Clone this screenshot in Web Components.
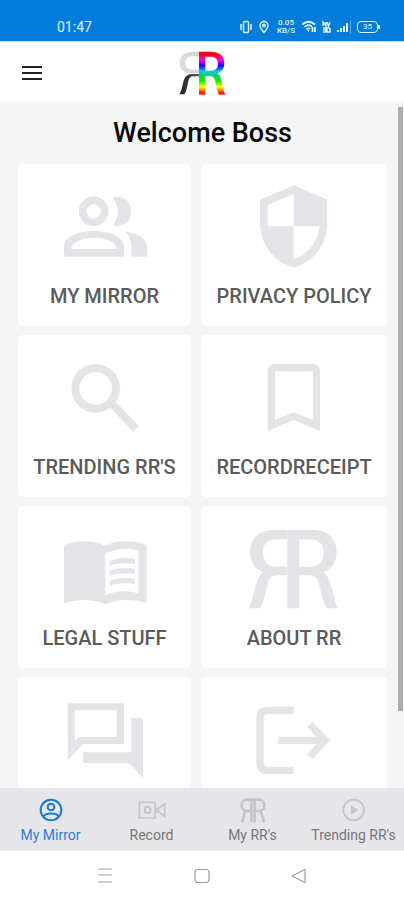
<!DOCTYPE html>
<html lang="en">
<head>
<meta charset="utf-8">
<meta name="viewport" content="width=device-width, initial-scale=1">
<title>RR</title>
<style>
html, body { margin: 0; height: 100%; }
body { font-family: Roboto, "Noto Sans", sans-serif; background: #fff; }
</style>
</head>
<body>
<rr-app></rr-app>
<script>
const RESET = `
  *, *::before, *::after { box-sizing: border-box; }
  button { appearance: none; border: 0; margin: 0; padding: 0; background: none; font: inherit; color: inherit; cursor: pointer; }
  svg { display: block; }
`;

/* One half of the double-R monogram; the other half is its mirror image. */
const HALF_R = 'M862 90H940C985 90 1010 118 1010 157C1010 188 996 207 970 216C985 227 991 248 997 272C1002 292 1006 308 1014 325H980C968 305 963 274 957 252C952 235 945 226 925 226H898V325H862ZM898 118V200H930C955 200 971 186 971 158C971 130 955 118 930 118Z';
const MONOGRAM = `<path fill-rule="evenodd" d="${HALF_R}"/><path fill-rule="evenodd" transform="translate(1760 0) scale(-1 1)" d="M898 90H940C985 90 1010 118 1010 157C1010 188 996 207 970 216C985 227 991 248 997 272C1002 292 1006 308 1014 325H980C968 305 963 274 957 252C952 235 945 226 925 226H898V200H930C955 200 971 186 971 158C971 130 955 118 930 118H898Z"/>`;

const ICONS = {
  people: ['164 63 300 300', `<circle cx="280" cy="169" r="33" fill="none" stroke="currentColor" stroke-width="23"/>
    <path d="M337 128C346 124 392 122 392 169C392 216 346 215 337 211C358 184 358 155 337 128Z"/>
    <path fill-rule="evenodd" d="M191 305V276C191 242 240 228 281 228S371 242 371 276V305ZM212 282H350C349 262 318 248 281 248S213 262 212 282Z"/>
    <path d="M376 230C412 235 440 250 440 277V305H393V277C393 255 386 241 376 230Z"/>`],
  shield: ['732 63 300 300', `<path fill-rule="evenodd" d="M881 91L982 134V205C982 268 940 321 881 338C822 321 780 268 780 205V134ZM881 116L803 150V214H881ZM881 214V314C922 300 954 260 959 214Z"/>`],
  search: ['164 51 300 300', `<circle cx="286" cy="175" r="61" fill="none" stroke="currentColor" stroke-width="24"/>
    <path d="M345 232L399 288" stroke="currentColor" stroke-width="24" stroke-linecap="square" stroke-linejoin="round"/>`],
  bookmark: ['732 51 300 300', `<path fill-rule="evenodd" d="M826 102H938Q960 102 960 126V303L881 270L803 303V126Q803 102 826 102ZM825 124V270L881 247L938 270V124Z"/>`],
  book: ['164 54 300 300', `<path fill-rule="evenodd" d="M191 135C225 121 280 118 315 138C350 118 405 121 439 135V310C400 296 350 296 315 313C280 296 230 296 191 310ZM315 160V287C345 271 385 271 414 281V151C380 142 345 146 315 160Z"/>
    <path d="M327 183C350 173 380 172 404 177V192C380 188 350 188 327 198ZM327 213C350 203 380 202 404 207V222C380 218 350 218 327 228ZM327 243C350 233 380 232 404 237V252C380 248 350 248 327 258Z"/>`],
  monogram: ['732 54 300 300', MONOGRAM],
  chat: ['164 57 300 300', `<path fill-rule="evenodd" d="M202 100H371V222H248L202 270ZM223 121V214L236 201H349V121Z"/>
    <path d="M393 144H420Q428 144 428 152V325L386 279H256Q248 279 248 271V247H393Z"/>`],
  exit: ['732 57 300 300', `<path d="M881 121H802Q780 121 780 143V279Q780 301 802 301H881M835 211H980M929 164L976 211L929 260" fill="none" stroke="currentColor" stroke-width="22"/>`],
  user: ['101 370 102 102', `<g fill="none" stroke="currentColor" stroke-width="6"><circle cx="152" cy="421" r="31"/><circle cx="152" cy="412" r="10"/><path d="M129 440C138 429 166 429 175 440"/></g>`],
  camera: ['407 370 102 102', `<path d="M420 398H467V445H420ZM496 403V440L477 426V417ZM467 417H477M467 426H477" fill="none" stroke="currentColor" stroke-width="5"/><circle cx="445" cy="421" r="9" fill="none" stroke="currentColor" stroke-width="6"/>`],
  monogramSmall: ['709 370 102 102', `<g fill="none" stroke="currentColor" stroke-width="8"><path d="M760 390H778C789 390 794 398 794 407S789 424 778 424H742C731 424 726 416 726 407S731 390 742 390Z"/><path d="M755 390V458M765 390V458M779 424C790 428 787 445 793 458M741 424C730 428 733 445 727 458"/></g>`],
  play: ['1013 370 102 102', `<circle cx="1063" cy="421" r="31" fill="none" stroke="currentColor" stroke-width="5"/><path d="M1055 407L1077 421L1055 436Z"/>`]
};
const icon = (name) => {
  const [box, art] = ICONS[name];
  return `<svg viewBox="${box}" fill="currentColor" aria-hidden="true">${art}</svg>`;
};

class RrElement extends HTMLElement {
  constructor() { super(); this.attachShadow({ mode: 'open' }); }
  connectedCallback() { this.shadowRoot.innerHTML = `<style>${RESET}${this.css()}</style>${this.html()}`; }
}

customElements.define('rr-status-bar', class extends RrElement {
  css() { return `
    :host { display: flex; align-items: center; justify-content: space-between; height: 42px; padding: 14px 24px 1px 57px;
      background: #007dda; border-bottom: 1px solid #c4e0f7; color: #e4f2fd; }
    time { font-size: 14px; line-height: 16px; }
    .right { display: flex; align-items: center; gap: 6px; }
    .speed { display: grid; font-size: 8px; line-height: 8px; font-weight: 500; text-align: center; width: 20px; }
    .speed span { height: 8px; overflow: hidden; }
    .battery { font-size: 8px; line-height: 8px; width: 21px; height: 12px; border: 1px solid; border-radius: 4px;
      display: grid; place-items: center; position: relative; margin-right: 2px; }
    .battery::after { content: ""; position: absolute; left: 20px; top: 3px; width: 2px; height: 4px; background: currentColor; border-radius: 0 1px 1px 0; }`; }
  html() { return `
    <time>01:47</time>
    <div class="right">
      <svg width="12" height="14" viewBox="0 0 12 14" fill="none" stroke="currentColor"><rect x="3.500" y="1.500" width="5" height="11" rx="1" stroke-width="1.400"/><path d="M1 4v6M11 4v6" stroke-width="1.500"/></svg>
      <svg width="12" height="14" viewBox="0 0 10 14" fill="none" stroke="currentColor" stroke-width="1.500"><path d="M5 12.500C2 9 1 7.500 1 5.500a4 4 0 0 1 8 0C9 7.500 8 9 5 12.500Z"/><circle cx="5" cy="5.500" r="1.300"/></svg>
      <div class="speed"><span>0.05</span><span>KB/S</span></div>
      <svg width="14" height="14" viewBox="0 0 14 14" fill="none" stroke="currentColor" stroke-width="1.800"><path d="M0 4.500Q6.500-1 13 4.500M2.500 7Q6.500 3.500 10 6.500M4.500 9.500Q6.500 7.500 8 9M10.500 7v5M13 7v5M6 11h1"/></svg>
      <svg width="9" height="14" viewBox="0 0 9 14" fill="none" stroke="currentColor" stroke-width="1.400"><path d="M1 6V2l3 4V2M5 2l1.500 4L8 2M1 8h3v4H1M8 8H5v4h3V8M1 10h3"/></svg>
      <svg width="14" height="14" viewBox="0 0 14 14" fill="currentColor"><path d="M0 10h2v2H0zM3 8h2v4H3zM6 6h2v6H6zM9 3h2v9H9z"/><path d="M13 0h1v14h-1z" opacity=".4"/></svg>
      <div class="battery">35</div>
    </div>`; }
});

customElements.define('rr-header', class extends RrElement {
  css() { return `
    :host { display: grid; grid-template-columns: 1fr auto 1fr; align-items: center; height: 60px; padding: 0 20px; background: #fff; border-bottom: 1px solid #fafafa; }
    button { width: 24px; height: 24px; color: #222; }
    .logo { width: 50px; height: 50px; }`; }
  html() { return `
    <button aria-label="Menu"><svg width="24" height="24" viewBox="0 0 24 24" stroke="currentColor" stroke-width="2"><path d="M2 7h20M2 13h20M2 19h20"/></svg></button>
    <svg class="logo" viewBox="532 141 150 150" role="img" aria-label="RR">
      <defs>
        <linearGradient id="rainbow" gradientUnits="userSpaceOnUse" x1="0" y1="155" x2="0" y2="284">
          <stop offset=".08" stop-color="#ff0018"/><stop offset=".2" stop-color="#f0e"/><stop offset=".32" stop-color="#20f"/>
          <stop offset=".46" stop-color="#0cf"/><stop offset=".54" stop-color="#0fd060"/><stop offset=".68" stop-color="#1e0"/>
          <stop offset=".82" stop-color="#ff0"/><stop offset=".95" stop-color="#f20"/>
        </linearGradient>
        <linearGradient id="ash" gradientUnits="userSpaceOnUse" x1="540" y1="0" x2="600" y2="0"><stop offset="0" stop-color="#dedede"/><stop offset="1" stop-color="#d2d2d2"/></linearGradient>
        <linearGradient id="coal" gradientUnits="userSpaceOnUse" x1="540" y1="0" x2="600" y2="0"><stop offset="0" stop-color="#222"/><stop offset="1" stop-color="#555"/></linearGradient>
      </defs>
      <path fill="url(#ash)" d="M599 155H580C555 155 540 167 540 188C540 208 553 219 575 219H599V209H580C564 209 557 202 557 189C557 176 565 169 580 169H599Z"/>
      <path fill="url(#coal)" d="M599 222H578C558 222 553 235 549 254C546 268 543 276 539 283H554C560 275 562 262 565 248C568 234 571 229 583 229H599Z"/>
      <path fill="url(#rainbow)" fill-rule="evenodd" d="M598 155H632C658 155 674 167 674 189C674 207 665 216 652 220C663 226 664 238 667 253C670 268 673 277 678 284H658C653 276 651 263 648 249C645 234 641 228 629 228H617V284H598ZM617 170V212H632C647 212 655 205 655 191C655 177 647 170 632 170Z"/>
    </svg>`; }
});

customElements.define('rr-card', class extends RrElement {
  css() { return `
    :host { display: block; }
    button { display: flex; flex-direction: column; align-items: center; gap: 8px; width: 100%; padding: 12px 0 18px; background: #fff;
      border-radius: 5px; color: #5a5a5a; font-size: 20px; line-height: 24px; font-weight: 500; white-space: nowrap; }
    svg { width: 100px; height: 100px; color: #e4e4e8; }`; }
  html() { return `<button>${icon(this.getAttribute('icon'))}<span><slot></slot></span></button>`; }
});

customElements.define('rr-tab', class extends RrElement {
  css() { return `
    :host { display: block; color: #777779; --art: #c6c6c9; }
    :host([active]) { color: #2b80d5; --art: #1c76d2; }
    button { display: flex; flex-direction: column; align-items: center; width: 100%; padding: 5px 0 7px; font-size: 14px; line-height: 16px; white-space: nowrap; }
    svg { width: 34px; height: 34px; color: var(--art); }`; }
  html() { return `<button>${icon(this.getAttribute('icon'))}<span><slot></slot></span></button>`; }
});

customElements.define('rr-system-nav', class extends RrElement {
  css() { return `
    :host { display: flex; justify-content: center; align-items: center; gap: 73px; height: 49px; background: #fff; color: #a0a0a0; }
    button { width: 24px; height: 24px; }`; }
  html() {
    const art = { Recents: 'M5 5h14M5 11h14M5 18h14', Home: 'M8 5.500h8q3 0 3 3v7q0 3-3 3H8q-3 0-3-3v-7q0-3 3-3Z', Back: 'M18 5.500v13L5 12Z' };
    return Object.entries(art).map(([n, d]) => `<button aria-label="${n}"><svg width="24" height="24" viewBox="0 0 24 24" fill="none" stroke="currentColor" stroke-width="1.200" stroke-linejoin="round"><path d="${d}"/></svg></button>`).join('');
  }
});

customElements.define('rr-app', class extends RrElement {
  css() { return `
    :host { display: flex; flex-direction: column; height: 100vh; overflow: hidden; }
    rr-status-bar, rr-header, rr-system-nav, nav { flex: none; }
    main { flex: 1; min-height: 0; overflow: hidden; position: relative; background: #f5f5f5; padding: 15px 17px 0 18px; }
    h1 { margin: 0 0 15px; font-size: 27px; line-height: 32px; font-weight: 500; text-align: center; color: #0a0a0a; }
    .grid { display: grid; grid-template-columns: 173fr 186fr; gap: 9px 10px; }
    .thumb { position: absolute; top: 5px; right: 1px; width: 5px; height: 88%; background: #adadad; }
    nav { display: grid; grid-template-columns: repeat(4, minmax(0, 1fr)); background: #e5e5ea; border-bottom: 1px solid #f0f0f2; }`; }
  html() { return `
    <rr-status-bar></rr-status-bar>
    <rr-header></rr-header>
    <main>
      <h1>Welcome Boss</h1>
      <div class="grid">
        <rr-card icon="people">MY MIRROR</rr-card>
        <rr-card icon="shield">PRIVACY POLICY</rr-card>
        <rr-card icon="search">TRENDING RR'S</rr-card>
        <rr-card icon="bookmark">RECORDRECEIPT</rr-card>
        <rr-card icon="book">LEGAL STUFF</rr-card>
        <rr-card icon="monogram">ABOUT RR</rr-card>
        <rr-card icon="chat"></rr-card>
        <rr-card icon="exit"></rr-card>
      </div>
      <div class="thumb"></div>
    </main>
    <nav>
      <rr-tab icon="user" active>My Mirror</rr-tab>
      <rr-tab icon="camera">Record</rr-tab>
      <rr-tab icon="monogramSmall">My RR's</rr-tab>
      <rr-tab icon="play">Trending RR's</rr-tab>
    </nav>
    <rr-system-nav></rr-system-nav>`; }
});
</script>
</body>
</html>
